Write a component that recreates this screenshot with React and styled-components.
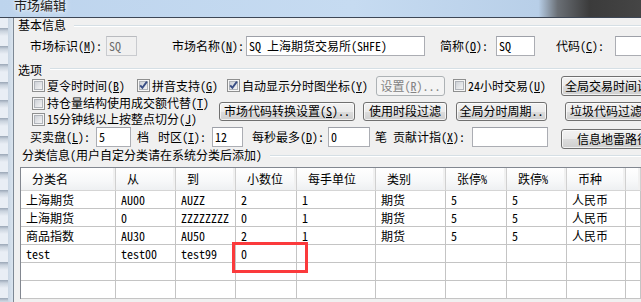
import React from 'react';
import styled, { createGlobalStyle } from 'styled-components';

const FONT = `"Noto Sans Mono CJK SC", "Noto Sans CJK SC", "DejaVu Sans", sans-serif`;

const Global = createGlobalStyle`
  html, body { margin: 0; padding: 0; }
  body {
    width: 641px; height: 302px; overflow: hidden;
    background: #f0f0f0; font-family: ${FONT}; font-size: 12px; color: #000;
  }
`;

const Screen = styled.div`
  position: relative;
  width: 641px; height: 302px; overflow: hidden;
  display: flex; flex-direction: column;
`;

const TitleBar = styled.div`
  flex: none; height: 17px; overflow: hidden;
  display: flex; align-items: flex-end;
  background: linear-gradient(to right, #bdd4ed 0%, #c6dbf1 55%, #b8cfe8 84%, #6a6f75 87%, #3b3b3b 92%, #454545 100%);
  border-bottom: 1px solid #3d4756;
`;

const TitleText = styled.div`
  margin: 0 0 6px 14px;
  font-size: 13px; line-height: 13px; color: #1e1e1e;
  text-shadow: 0 0 6px #fff, 0 0 3px #fff;
`;

const Body = styled.div`
  flex: 1; display: flex; min-height: 0;
`;

const LeftEdge = styled.div`
  flex: none; width: 13px;
  display: flex;
`;

const BehindStrip = styled.div`
  width: 8px;
  background: repeating-linear-gradient(to bottom, #e9eef5 0px, #e9eef5 10px, #9aa6b6 10px, #c9d2dd 13px, #e9eef5 18px);
`;

const FrameStrip = styled.div`
  flex: 1;
  background: linear-gradient(to right, #c9d6e4, #dbe5ef);
`;

const Client = styled.div`
  flex: 1; min-width: 0;
  border-left: 1px solid #7d8894;
  display: flex; flex-direction: column;
  padding-left: 4px;
`;

const GroupHeader = styled.div`
  flex: none; display: flex; align-items: center;
  height: 12px; margin-top: ${p => p.$mt || 0}px;
  padding-left: ${p => p.$pl || 0}px;
`;

const GroupTitle = styled.span`
  white-space: nowrap; line-height: 12px; font-size: 12px;
`;

const GroupLine = styled.div`
  flex: 1; margin-left: 8px; margin-top: ${p => p.$lt || 0}px;
  height: 0;
  border-top: 1px solid #d5dfe5;
  border-bottom: 1px solid #ffffff;
`;

const Row = styled.div`
  flex: none; display: flex; align-items: center;
  height: ${p => p.$h}px; margin-top: ${p => p.$mt || 0}px;
`;

const Label = styled.span`
  flex: none; width: ${p => p.$w}px; margin-left: ${p => p.$ml || 0}px;
  white-space: nowrap; line-height: 16px;
  u { text-decoration: underline; text-underline-offset: 1px; }
`;

const Input = styled.div`
  flex: none; box-sizing: border-box;
  width: ${p => p.$w}px; height: 20px; margin-left: ${p => p.$ml || 0}px;
  border: 1px solid ${p => (p.$disabled ? '#c9cbcf' : '#abadb3')};
  border-top-color: ${p => (p.$disabled ? '#b9bbbf' : '#9da0a8')};
  background: ${p => (p.$disabled ? '#f0f0f0' : '#ffffff')};
  color: ${p => (p.$disabled ? '#6d6d6d' : '#000')};
  padding: 0 2px; display: flex; align-items: center;
  white-space: nowrap; overflow: hidden; line-height: 16px;
`;

const Button = styled.div`
  flex: none; box-sizing: border-box;
  width: ${p => p.$w}px; height: ${p => p.$h || 20}px;
  margin-left: ${p => p.$ml || 0}px; margin-top: ${p => p.$mt || 0}px;
  border: 1px solid ${p => (p.$disabled ? '#adb2b5' : '#707070')};
  border-radius: 3px;
  background: ${p => (p.$disabled
    ? '#f4f4f4'
    : 'linear-gradient(to bottom, #f2f2f2 0%, #ebebeb 50%, #dddddd 51%, #cfcfcf 100%)')};
  box-shadow: inset 0 0 0 1px ${p => (p.$disabled ? '#f4f4f4' : 'rgba(255,255,255,0.7)')};
  color: ${p => (p.$disabled ? '#838383' : '#000')};
  display: flex; align-items: center;
  justify-content: ${p => (p.$pl != null ? 'flex-start' : 'center')};
  padding-left: ${p => p.$pl || 0}px;
  white-space: nowrap; line-height: 16px;
`;

const CheckItem = styled.div`
  flex: none; display: flex; align-items: center;
  width: ${p => p.$w}px; margin-left: ${p => p.$ml || 0}px;
  height: ${p => p.$h || 16}px;
  white-space: nowrap; line-height: 16px;
  svg { flex: none; margin-right: 2px; }
  u { text-decoration: underline; text-underline-offset: 1px; }
`;

const Middle = styled.div`
  flex: none; display: flex; align-items: center; height: 32px;
`;

const LeftCol = styled.div`
  flex: none; width: 183px; margin-left: 18px;
  display: flex; flex-direction: column;
`;

const TableWrap = styled.div`
  flex: none; margin: 6px 0 0 2px;
  border-left: 1px solid #828790; border-top: 1px solid #828790;
  background: #fff;
  display: grid;
  grid-template-columns: 95px 60px 60px 61px 79px 70px 61px 60px 59px 1fr;
  grid-template-rows: 23px;
  grid-auto-rows: 18px;
`;

const HeadCell = styled.div`
  height: 23px; box-sizing: border-box;
  display: flex; align-items: center; padding-left: ${p => p.$pl || 11}px;
  background: linear-gradient(to bottom, #ffffff 0%, #f7f8f9 60%, #eef0f2 100%);
  border-right: 1px solid #d0d0d0;
  box-shadow: inset -2px 0 0 #f1f1f1;
  border-bottom: 1px solid #d5d5d5;
  white-space: nowrap; line-height: 16px; font-size: 12px;
`;

const Cell = styled.div`
  box-sizing: border-box; height: 18px;
  border-right: 1px solid #c4c4c4; border-bottom: 1px solid #c4c4c4;
  display: flex; align-items: center; padding-left: 5px;
  white-space: nowrap; line-height: 16px;
`;

const RedBox = styled.div`
  position: absolute; left: 232px; top: 242px;
  width: 76px; height: 31px; box-sizing: border-box;
  border: 3px solid #fb3a3c;
  pointer-events: none;
`;

const CheckBox = ({ checked }) => (
  <svg width="13" height="13" viewBox="0 0 13 13">
    <defs>
      <linearGradient id={checked ? 'cbg1' : 'cbg0'} x1="0" y1="0" x2="1" y2="1">
        <stop offset="0" stopColor="#cbcfd5" />
        <stop offset="1" stopColor="#f7f7f7" />
      </linearGradient>
    </defs>
    <rect x="0.5" y="0.5" width="12" height="12" fill="#f6f6f6" stroke="#8e8f8f" />
    <rect x="2.5" y="2.5" width="8" height="8" fill={`url(#${checked ? 'cbg1' : 'cbg0'})`} stroke="#b0b4ba" />
    {checked && (
      <path d="M3.2 6.3 L5.4 8.8 L9.9 2.6" stroke="#3a4f85" strokeWidth="1.9" fill="none" />
    )}
  </svg>
);

const Mn = ({ label, k, colon }) => (
  <>
    {label}(<u>{k}</u>){colon ? ':' : ''}
  </>
);

const rows = [
  ['上海期货', 'AU00', 'AUZZ', '2', '1', '期货', '5', '5', '人民币'],
  ['上海期货', '0', 'ZZZZZZZZ', '0', '1', '期货', '5', '5', '人民币'],
  ['商品指数', 'AU30', 'AU50', '2', '1', '期货', '5', '5', '人民币'],
  ['test', 'test00', 'test99', '0', '', '', '', '', ''],
  ['', '', '', '', '', '', '', '', ''],
  ['', '', '', '', '', '', '', '', ''],
];

const heads = ['分类名', '从', '到', '小数位', '每手单位', '类别', '张停%', '跌停%', '币种', ''];

export default function App() {
  return (
    <Screen>
      <Global />
      <TitleBar>
        <TitleText>市场编辑</TitleText>
      </TitleBar>
      <Body>
        <LeftEdge>
          <BehindStrip />
          <FrameStrip />
        </LeftEdge>
        <Client>
          <GroupHeader $mt={1}>
            <GroupTitle>基本信息</GroupTitle>
            <GroupLine $lt={1} />
          </GroupHeader>
          <Row $h={20} $mt={5}>
            <Label $w={76} $ml={12}><Mn label="市场标识" k="M" colon /></Label>
            <Input $w={31} $disabled>SQ</Input>
            <Label $w={74} $ml={35}><Mn label="市场名称" k="N" colon /></Label>
            <Input $w={179}>SQ 上海期货交易所(SHFE)</Input>
            <Label $w={56} $ml={15}><Mn label="简称" k="O" colon /></Label>
            <Input $w={39}>SQ</Input>
            <Label $w={59} $ml={21}><Mn label="代码" k="C" colon /></Label>
            <Input $w={40} />
          </Row>

          <GroupHeader $mt={8}>
            <GroupTitle>选项</GroupTitle>
            <GroupLine $lt={-3} />
          </GroupHeader>
          <Row $h={19}>
            <CheckItem $w={105} $ml={14}><CheckBox /><span><Mn label="夏令时时间" k="B" /></span></CheckItem>
            <CheckItem $w={90}><CheckBox checked /><span><Mn label="拼音支持" k="G" /></span></CheckItem>
            <CheckItem $w={149}><CheckBox checked /><span><Mn label="自动显示分时图坐标" k="Y" /></span></CheckItem>
            <Button $w={69} $disabled>设置(<u>R</u>)...</Button>
            <CheckItem $w={108} $ml={8}><CheckBox /><span><Mn label="24小时交易" k="U" /></span></CheckItem>
            <Button $w={112} $pl={3}>全局交易时间设置...</Button>
          </Row>
          <Middle>
            <LeftCol>
              <CheckItem $w={183} $ml={-4}><CheckBox /><span><Mn label="持仓量结构使用成交额代替" k="T" /></span></CheckItem>
              <CheckItem $w={183} $ml={-4}><CheckBox /><span><Mn label="15分钟线以上按整点切分" k="J" /></span></CheckItem>
            </LeftCol>
            <Button $w={136} $h={19}>市场代码转换设置(<u>S</u>)..</Button>
            <Button $w={84} $h={19} $ml={8}>使用时段过滤</Button>
            <Button $w={91} $h={19} $ml={9}>全局分时周期..</Button>
            <Button $w={112} $h={19} $ml={18} $pl={4}>垃圾代码过滤设置...</Button>
          </Middle>
          <Row $h={20}>
            <Label $w={66} $ml={12}><Mn label="买卖盘" k="L" colon /></Label>
            <Input $w={35}>5</Input>
            <Label $w={21} $ml={6}>档</Label>
            <Label $w={54}><Mn label="时区" k="I" colon /></Label>
            <Input $w={31}>12</Input>
            <Label $w={76} $ml={9}><Mn label="每秒最多" k="D" colon /></Label>
            <Input $w={42}>0</Input>
            <Label $w={18} $ml={5}>笔</Label>
            <Label $w={79}><Mn label="贡献计指" k="X" colon /></Label>
            <Input $w={76} />
            <Button $w={112} $ml={13} $mt={4} $pl={15}>信息地雷路径...</Button>
          </Row>

          <GroupHeader $mt={2} $pl={4}>
            <GroupTitle>分类信息(用户自定分类请在系统分类后添加)</GroupTitle>
            <GroupLine $lt={1} />
          </GroupHeader>
          <TableWrap>
            {heads.map((h, i) => (
              <HeadCell key={i}>{h}</HeadCell>
            ))}
            {rows.map((r, ri) => (
              <React.Fragment key={ri}>
                {r.map((c, ci) => (
                  <Cell key={ci}>{c}</Cell>
                ))}
                <Cell />
              </React.Fragment>
            ))}
          </TableWrap>
        </Client>
      </Body>
      <RedBox />
    </Screen>
  );
}
